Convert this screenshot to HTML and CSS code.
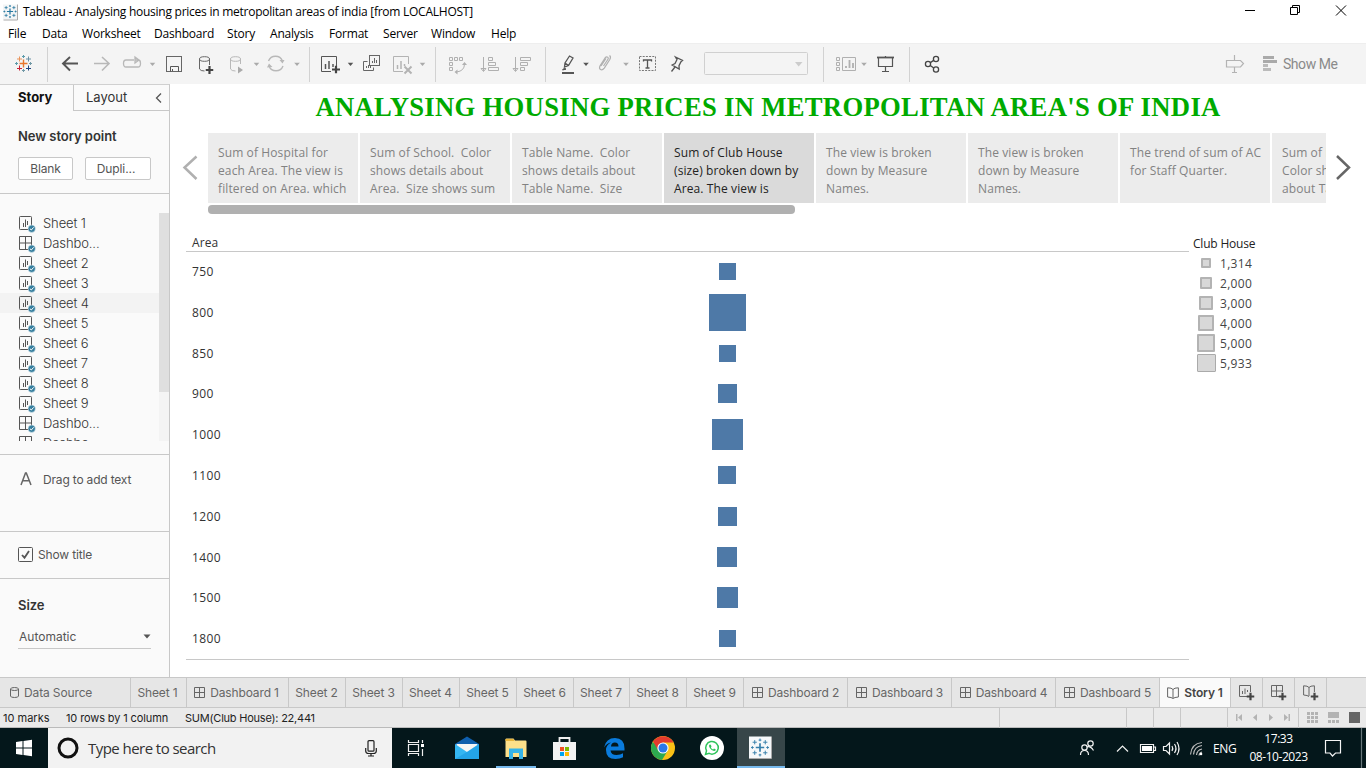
FILE: index.html
```html
<!DOCTYPE html>
<html lang="en">
<head>
<meta charset="utf-8">
<title>Tableau - Analysing housing prices in metropolitan areas of india</title>
<link rel="stylesheet" href="styles.css">
</head>
<body>
<svg class="defs" width="0" height="0">
  <symbol id="plus" viewBox="0 0 8 8"><path d="M4 0v8M0 4h8" stroke="#444" stroke-width="2.2"/></symbol>
  <symbol id="drop" viewBox="0 0 6 4"><path d="M0 0h6L3 3.6z"/></symbol>
  <symbol id="sheet" viewBox="0 0 17 17"><rect x=".5" y=".5" width="12" height="13" rx=".8" fill="none" stroke="#555"/><path d="M4.500 11V7M6.500 11V3.500M8.500 9V5" fill="none" stroke="#555"/><circle cx="12.700" cy="12.700" r="3.700" fill="#367f9f" stroke="#fafafa" stroke-width=".5"/><path d="M10.900 12.700l1.400 1.300 2.300-2.600" fill="none" stroke="#fff"/></symbol>
  <symbol id="dash" viewBox="0 0 17 17"><path d="M.5.500h12v13H.5zM6.500.500v13M.5 7h12" fill="none" stroke="#555"/><circle cx="12.700" cy="12.700" r="3.700" fill="#367f9f" stroke="#fafafa" stroke-width=".5"/><path d="M10.900 12.700l1.400 1.300 2.300-2.600" fill="none" stroke="#fff"/></symbol>
  <symbol id="grid" viewBox="0 0 11 11"><path d="M.5.500h10v10H.5zM5.500.500v10M.5 5.500h10" fill="none" stroke="#666"/></symbol>
  <symbol id="book" viewBox="0 0 12 12"><path d="M6 2.500L4 1.200.600.800v9.200l3.400.500 2 1 2-1 3.400-.5V.800L8 1.200zM6 2.500V11" fill="none" stroke="#666"/></symbol>
  <symbol id="mark" viewBox="-9 -9 18 18"><path d="M0-4v8M-4 0h8" stroke-width="1.600"/><path d="M-5-7v4M-7-5h4M5-7v4M3-5h4M-5 3v4M-7 5h4M5 3v4M3 5h4M0-8.500v2.600M-1.300-7h2.600M0 5.900v2.600M-1.300 7h2.600M-8.500 0h2.600M-7.200-1.300v2.600M5.900 0h2.600M7.200-1.300v2.600"/></symbol>
</svg>
<div class="window">
  <header class="titlebar">
    <svg class="app-icon" width="16" height="18" viewBox="0 0 16 18"><rect width="14.500" height="15" y="1.500" fill="#f3f5f6"/><path d="M14.500 1.500v15.500H.5" fill="none" stroke="#aaa"/><use href="#mark" x="0" y="1.500" width="14" height="14" stroke="#2678a0"/></svg>
    <span class="title-text">Tableau - Analysing housing prices in metropolitan areas of india [from LOCALHOST]</span>
    <svg class="controls" width="126" height="23" viewBox="1240 0 126 23" fill="none" stroke="#000"><path d="M1245 10.500h10M1290.500 7.500h7v7h-7zM1292.500 7.500v-2h7v7h-2M1336 5.500l10 10M1346 5.500l-10 10"/></svg>
  </header>
  <nav class="menubar"><span class="m-file">File</span><span class="m-data">Data</span><span class="m-work">Worksheet</span><span class="m-dash">Dashboard</span><span class="m-story">Story</span><span class="m-ana">Analysis</span><span class="m-format">Format</span><span class="m-server">Server</span><span class="m-window">Window</span><span>Help</span></nav>

  <div class="toolbar">
    <svg class="group" width="48" height="41" viewBox="0 43 48 41" fill="none"><path d="M23.500 59.500v8M19.500 63.500h8" stroke="#e8762c" stroke-width="1.400"/><path d="M19.500 56.500v5M17 59h5" stroke="#e8935a"/><path d="M28.500 56.500v5M26 59h5" stroke="#6b91a5"/><path d="M19.500 65.500v5M17 68.500h5" stroke="#c72035"/><path d="M28.500 65.500v5M26 68.500h5" stroke="#1f447e"/><path d="M23.500 55v3M22 56.500h3M16.500 62v3M15 63.500h3" stroke="#5b9aaa"/><path d="M23.500 69v3M22 70.500h3M30.500 62v3M29 63.500h3" stroke="#7199a6"/></svg>
    <svg class="group" width="262" height="41" viewBox="48 43 262 41" fill="none">
      <path d="M63 63.500h15M70 57l-7 6.500 7 7" stroke="#555" stroke-width="1.900"/>
      <g stroke="#b8b8b8" stroke-width="1.300"><path d="M94 63.500h15M102 57l7 6.500-7 7" stroke-width="1.600"/><path d="M134 60h-8q-2.500 0-2.500 3.500t2.500 3.500h12q2.500 0 2.500-3.500t-2-3.500h-3M135 57l4 3-4 3z"/></g>
      <rect x="166.500" y="56.500" width="15" height="15" stroke="#666"/><path d="M170.500 71.500v-5h8v5M172.500 69v2" stroke="#555"/>
      <g stroke="#666"><ellipse cx="204.500" cy="59" rx="5" ry="2.300"/><path d="M199.500 59v10q1 2 5 2M209.500 59v6"/></g><use href="#plus" x="205.500" y="66" width="8" height="8"/>
      <g stroke="#b8b8b8"><ellipse cx="235.500" cy="59" rx="5" ry="2.300"/><path d="M230.500 59v10q1 2 5 2M240.500 59v5"/></g><path d="M238 66.500l5 3.500-5 3.500z" fill="#aaa"/>
      <path d="M268.500 61a7.500 7.500 0 0 1 14 0M283 66a7.500 7.500 0 0 1-14 0" stroke="#b8b8b8" stroke-width="1.400"/><path d="M279.500 60h5l-2 3.500zM267 67.500l2-4 3.500 3.500z" fill="#b8b8b8"/>
      <g fill="#aaa"><use href="#drop" x="149.500" y="62.500" width="6" height="4"/><use href="#drop" x="253.500" y="62.500" width="6" height="4"/><use href="#drop" x="294" y="62.500" width="6" height="4"/></g>
    </svg>
    <svg class="group" width="126" height="41" viewBox="310 43 126 41" fill="none">
      <path d="M331 71.500h-9.500v-15h15V66" stroke="#555"/><path d="M325.500 64v5M329 61v8M333 64v3" stroke="#555" stroke-width="1.500"/><use href="#plus" x="332" y="65.500" width="8" height="8"/>
      <g stroke="#666"><rect x="369.500" y="55.500" width="10" height="10"/><path d="M372.500 63v-2M374.500 63v-5M376.500 63v-3M367.500 61.500h-4v9h10v-3M366.500 68v-2M368.500 68v-3M370.500 68v-2"/></g>
      <g stroke="#b3b3b3"><path d="M403 71.500h-9.500v-15h15V64"/><path d="M397.500 65v4M401 61v8M404.500 64v2" stroke-width="1.500"/><path d="M404.500 66.500l7 7M411.500 66.500l-7 7" stroke-width="2"/></g>
      <use href="#drop" x="347.500" y="62.500" width="6" height="4" fill="#555"/><use href="#drop" x="419.500" y="62.500" width="6" height="4" fill="#aaa"/>
    </svg>
    <svg class="group" width="110" height="41" viewBox="436 43 110 41" fill="none" stroke="#b0b0b0">
      <path d="M449.500 57.500h3v3h-3zM454.500 57.500h3v3h-3zM459.500 57.500h3v3h-3zM449.500 62.500h3v3h-3zM449.500 67.500h3v3h-3zM464.500 64q0 7-8 8"/><path d="M462 65l2.500-3 2.500 3zM457.500 69.500l-3 2.500 3 2.500z" fill="#b0b0b0" stroke="none"/>
      <path d="M483.500 57v14M481 68.500h5l-2.500 3zM488.500 57.500h4v3h-4zM488.500 62.500h7v3h-7zM488.500 67.500h10v3h-10z"/>
      <path d="M515.500 57v14M513 68.500h5l-2.500 3zM520.500 57.500h10v3h-10zM520.500 62.500h7v3h-7zM520.500 67.500h4v3h-4z"/>
    </svg>
    <svg class="group" width="278" height="41" viewBox="546 43 278 41" fill="none" stroke="#555">
      <path d="M564.500 67l.5-4 4.500-7 3.500 2-4.500 7.500zM565 63l3.500 2.500" stroke-width="1.300"/><path d="M562.500 70l2-2 1.500 1.200z" fill="#555"/><path d="M562 73h12" stroke-width="2"/>
      <path d="M603.500 66l4-6q1.500-2 .2-2.800t-2.700.8l-4.800 7.500q-1.500 3 .3 4t3.800-1.400l5.500-8.600q1.500-3-.3-4M601 66l5-7.500" stroke="#b0b0b0" stroke-width="1.200"/>
      <rect x="639.500" y="56.500" width="16" height="14" stroke="#777" stroke-dasharray="2 1.200"/><path d="M643.500 61.500v-1.500h8v1.500M647.500 60v8M645.500 68h4" stroke-width="1.300"/>
      <path d="M675.500 57l7 3.500-1.500 1.200-2 4 .2 3.300-7-4 2.800-1.400 2-4zM675 67l-3.500 4.500" stroke-width="1.300"/>
      <rect x="704.500" y="52.500" width="103" height="22" rx="1" stroke="#d0d0d0"/><path d="M795 62h7.500l-3.800 4.500z" fill="#ccc" stroke="none"/>
      <g stroke="none"><use href="#drop" x="583" y="62.500" width="6" height="4" fill="#555"/><use href="#drop" x="623" y="62.500" width="6" height="4" fill="#aaa"/></g>
    </svg>
    <svg class="group" width="86" height="41" viewBox="824 43 86 41" fill="none">
      <g stroke="#b0b0b0"><path d="M836.500 57.500h3v3h-3zM836.500 62.500h3v3h-3zM836.500 67.500h3v3h-3zM842.500 57.500h13v13h-13z"/><path d="M846 68v-2M849.500 68v-8M853 68v-5" stroke-width="1.800"/></g>
      <use href="#drop" x="861" y="62.500" width="6" height="4" fill="#aaa"/>
      <path d="M877 57.500h17" stroke="#555" stroke-width="1.800"/><path d="M878.500 58v8.500h14V58M885.500 67v4M882 71.500h7M885.500 56v1" stroke="#555" stroke-width="1.200"/>
    </svg>
    <svg class="group last" width="32" height="41" viewBox="910 43 32 41" fill="none" stroke="#444" stroke-width="1.300"><circle cx="928" cy="64" r="2.600"/><circle cx="936" cy="59" r="2.600"/><circle cx="936" cy="69.500" r="2.600"/><path d="M930.300 62.600l3.400-2.200M930.300 65.500l3.400 2.500"/></svg>
    <svg class="guide" width="56" height="41" viewBox="1224 43 56 41" fill="none"><path d="M1226.500 60.500h14l3 3-3 3.500h-14zM1234.500 55v5M1234.500 67v5.500M1232 72.500h5" stroke="#b3b3b3" stroke-width="1.200"/><path d="M1263 57.500h11M1263 61.500h14" stroke="#aaa" stroke-width="3"/><path d="M1263 65.500h5M1263 69.500h8" stroke="#bbb" stroke-width="3"/></svg>
    <span class="showme">Show Me</span>
  </div>

  <main class="work">
    <aside class="side">
      <div class="side-tabs"><b>Story</b><span>Layout<svg width="7" height="12" viewBox="0 0 7 12" fill="none" stroke="#555" stroke-width="1.300"><path d="M6 1.500L1.500 6 6 10.500"/></svg></span></div>
      <section class="new-point"><h2>New story point</h2><div class="buttons"><button class="blank">Blank</button><button class="dup">Dupli...</button></div></section>
      <section class="sheets">
        <ul>
          <li><svg width="17" height="17"><use href="#sheet"/></svg>Sheet 1</li>
          <li><svg width="17" height="17"><use href="#dash"/></svg>Dashbo...</li>
          <li><svg width="17" height="17"><use href="#sheet"/></svg>Sheet 2</li>
          <li><svg width="17" height="17"><use href="#sheet"/></svg>Sheet 3</li>
          <li class="hover"><svg width="17" height="17"><use href="#sheet"/></svg>Sheet 4</li>
          <li><svg width="17" height="17"><use href="#sheet"/></svg>Sheet 5</li>
          <li><svg width="17" height="17"><use href="#sheet"/></svg>Sheet 6</li>
          <li><svg width="17" height="17"><use href="#sheet"/></svg>Sheet 7</li>
          <li><svg width="17" height="17"><use href="#sheet"/></svg>Sheet 8</li>
          <li><svg width="17" height="17"><use href="#sheet"/></svg>Sheet 9</li>
          <li><svg width="17" height="17"><use href="#dash"/></svg>Dashbo...</li>
          <li><svg width="17" height="17"><use href="#dash"/></svg>Dashbo...</li>
        </ul>
        <div class="track"><div class="thumb"></div></div>
      </section>
      <section class="drag"><svg width="12" height="14" viewBox="0 0 12 14" fill="none" stroke="#666" stroke-width="1.500"><path d="M1 13L5.500 1h.8L11 13M2.800 8.800h6.400"/></svg><span>Drag to add text</span></section>
      <section class="show-title"><svg width="15" height="15" viewBox="0 0 15 15" fill="none"><rect x=".5" y=".5" width="14" height="14" rx="1" stroke="#555"/><path d="M4 8l2.500 2.700L11 4" stroke="#555" stroke-width="1.800"/></svg><span>Show title</span></section>
      <section class="size"><h2>Size</h2><div class="select"><span>Automatic</span><svg width="8" height="5" viewBox="0 0 8 5" fill="#555"><path d="M.5.500h7L4 4.500z"/></svg></div></section>
    </aside>

    <section class="story">
      <h1>ANALYSING HOUSING PRICES IN METROPOLITAN AREA'S OF INDIA</h1>
      <div class="navigator">
        <svg class="prev" width="38" height="70" viewBox="170 133 38 70" fill="none" stroke="#b0b0b0" stroke-width="2.500"><path d="M196.500 156.500L184.500 167.500l12 11.500"/></svg>
        <div class="points">
          <div class="point">Sum of Hospital for<br>each Area. The view is<br>filtered on Area. which</div>
          <div class="point">Sum of School.&nbsp; Color<br>shows details about<br>Area.&nbsp; Size shows sum</div>
          <div class="point">Table Name.&nbsp; Color<br>shows details about<br>Table Name.&nbsp; Size</div>
          <div class="point active">Sum of Club House<br>(size) broken down by<br>Area. The view is</div>
          <div class="point">The view is broken<br>down by Measure<br>Names.</div>
          <div class="point">The view is broken<br>down by Measure<br>Names.</div>
          <div class="point">The trend of sum of AC<br>for Staff Quarter.</div>
          <div class="point">Sum of H<br>Color sho<br>about Tab</div>
        </div>
        <svg class="next" width="40" height="70" viewBox="1326 133 40 70" fill="none" stroke="#666" stroke-width="2.500"><path d="M1337 156l12 11.500-12 11.500"/></svg>
      </div>
      <div class="hscroll"></div>
      <div class="view">
        <svg class="chart" width="1019" height="440" viewBox="170 228 1019 440">
          <path d="M186 251.500h1003M186 659.500h1003" stroke="#c8c8c8"/>
          <g class="labels"><text class="head" x="192" y="247">Area</text><text x="192" y="276">750</text><text x="192" y="317">800</text><text x="192" y="358">850</text><text x="192" y="398">900</text><text x="192" y="439">1000</text><text x="192" y="480">1100</text><text x="192" y="521">1200</text><text x="192" y="562">1400</text><text x="192" y="602">1500</text><text x="192" y="643">1800</text></g>
          <g fill="#4e79a7"><rect x="719" y="263" width="17" height="17"/><rect x="709" y="294" width="37" height="37"/><rect x="719" y="345" width="17" height="17"/><rect x="718" y="384" width="19" height="19"/><rect x="712" y="419" width="31" height="31"/><rect x="718" y="466" width="18" height="18"/><rect x="718" y="507" width="19" height="19"/><rect x="717" y="547" width="20" height="20"/><rect x="717" y="587" width="21" height="21"/><rect x="719" y="630" width="17" height="17"/></g>
        </svg>
        <div class="legend">
          <h3>Club House</h3>
          <div><i class="s1"></i>1,314</div><div><i class="s2"></i>2,000</div><div><i class="s3"></i>3,000</div><div><i class="s4"></i>4,000</div><div><i class="s5"></i>5,000</div><div><i class="s6"></i>5,933</div>
        </div>
      </div>
    </section>
  </main>

  <nav class="tabs">
    <span class="source"><svg width="9" height="11" viewBox="0 0 9 11" fill="none" stroke="#666"><ellipse cx="4.500" cy="2" rx="4" ry="1.500"/><path d="M.5 2v7q0 1.500 4 1.500t4-1.500V2"/></svg>Data Source</span>
    <span class="first">Sheet 1</span>
    <span class="d1"><svg width="11" height="11"><use href="#grid"/></svg>Dashboard 1</span>
    <span class="s">Sheet 2</span><span class="s">Sheet 3</span><span class="s">Sheet 4</span><span class="s">Sheet 5</span><span class="s">Sheet 6</span><span class="s narrow">Sheet 7</span><span class="s">Sheet 8</span><span class="s">Sheet 9</span>
    <span class="d"><svg width="11" height="11"><use href="#grid"/></svg>Dashboard 2</span>
    <span class="d"><svg width="11" height="11"><use href="#grid"/></svg>Dashboard 3</span>
    <span class="d"><svg width="11" height="11"><use href="#grid"/></svg>Dashboard 4</span>
    <span class="d"><svg width="11" height="11"><use href="#grid"/></svg>Dashboard 5</span>
    <span class="current"><svg width="12" height="12"><use href="#book"/></svg>Story 1</span>
    <span class="new"><svg width="16" height="16" viewBox="0 0 16 16"><path d="M8 11.500H.5V.500h11V7M3.500 9V6M6 9V3.500M8.500 7V5" fill="none" stroke="#666"/><use href="#plus" x="7.500" y="7.500" width="8" height="8"/></svg></span>
    <span class="new"><svg width="16" height="16" viewBox="0 0 16 16"><path d="M8 11.500H.5V.500h11V7M5.500.500v11M.5 6h11" fill="none" stroke="#666"/><use href="#plus" x="7.500" y="7.500" width="8" height="8"/></svg></span>
    <span class="new"><svg width="16" height="16" viewBox="0 0 16 16"><path d="M6 2.500L4 1.200.600.800v9.200l3.400.500 2 1M6 2.500V11M6 2.500L8 1.200l3.400-.4V7" fill="none" stroke="#666"/><use href="#plus" x="7.500" y="7.500" width="8" height="8"/></svg></span>
  </nav>
  <footer class="status">
    <span class="marks">10 marks</span><span class="rows">10 rows by 1 column</span><span class="sum">SUM(Club House): 22,441</span>
    <svg width="368" height="20" viewBox="998 708 368 20" fill="#b3b3b3"><path d="M999.500 708v20M1126.500 708v20M1153.500 708v20M1180.500 708v20M1227.500 708v20M1298.500 708v20" stroke="#c8c8c8"/><path d="M1236 714h1.500v7h-1.500zM1242 714v7l-4-3.500zM1257 714v7l-4-3.500zM1269 714v7l4-3.500zM1284 714v7l4-3.500zM1288.500 714h1.500v7h-1.500z"/><path d="M1307 712h3v3h-3zM1311 712h3v3h-3zM1315 712h3v3h-3zM1307 716h3v3h-3zM1311 716h3v3h-3zM1315 716h3v3h-3zM1307 720h3v3h-3zM1311 720h3v3h-3zM1315 720h3v3h-3zM1328 712h11v6h-11zM1328 720h3v3h-3zM1332 720h3v3h-3zM1336 720h3v3h-3z"/><path d="M1349 712h11v11h-11z" fill="#666"/></svg>
  </footer>

  <footer class="taskbar">
    <svg class="start" width="48" height="40" viewBox="0 728 48 40" fill="#fff"><path d="M16 742l6.500-1v6.500H16zM23.500 740.900l8.500-1.200v7.800h-8.500zM16 748.500h6.500v6.500l-6.500-1zM23.500 748.500H32v7.800l-8.500-1.200z"/></svg>
    <div class="search"><svg width="22" height="22" viewBox="0 0 22 22" fill="none" stroke="#111" stroke-width="3"><circle cx="11" cy="11" r="9"/></svg><span>Type here to search</span><svg class="mic" width="12" height="17" viewBox="0 0 12 17" fill="none" stroke="#222" stroke-width="1.200"><rect x="3" y=".7" width="6" height="10.500" rx="1"/><path d="M.7 8v3q0 2.500 3 2.500h4.600q3 0 3-2.500V8M6 13.500v2.500M3 16h6"/></svg></div>
    <svg class="pins" width="345" height="40" viewBox="392 728 345 40">
      <path d="M408.500 740v2.500h10V740M408.500 756v-2.500h10V756M408.500 744.500h10v7h-10zM422.500 740v3M422.500 749v7" fill="none" stroke="#eee" stroke-width="1.200"/><path d="M421 744h3v3h-3z" fill="#fff"/>
      <path d="M455 744l12-7.500 12 7.500v4h-24z" fill="#0f5fae"/><path d="M456.500 744h21v8h-21z" fill="#f5f5f5"/><path d="M455 744v15h24v-15l-12 8z" fill="#35b6f2"/><path d="M455 759l12-7 12-8v15z" fill="#1595e0" opacity=".55"/>
      <path d="M505.500 739.500q0-1 1-1h7l1.500 2h10.500q1 0 1 1V757h-21z" fill="#fde08a"/><path d="M505.500 739h8l1 2h-9z" fill="#e8b53c"/><path d="M509 748.500h14V759h-4v-6h-6v6h-4z" fill="#35b3e8"/><path d="M496 766h40v2h-40z" fill="#76b9ed"/>
      <path d="M553 742h23v18h-23z" fill="#f3f3f3"/><path d="M559.500 745v-7h10v7" fill="none" stroke="#eee" stroke-width="1.800"/><path d="M560 747h4v4h-4z" fill="#f25022"/><path d="M565 747h4v4h-4z" fill="#7fba00"/><path d="M560 752h4v4h-4z" fill="#00a4ef"/><path d="M565 752h4v4h-4z" fill="#ffb900"/>
      <path d="M604 747.500q2-9.500 11-9.500 9.500 0 9.500 10.500v2h-14q.7 4.500 6 4.500 4 0 6.500-1.700v4q-3 1.700-7.500 1.700-9.500 0-9.500-9 0-5 5-7.500-4 .7-7 5zM611 746.500h7.500q0-4-3.600-4t-3.900 4z" fill="#0a7bdc" fill-rule="evenodd"/>
      <circle cx="663" cy="748" r="12" fill="#fbc116"/><path d="M663 748h-2l-8.400-6A12 12 0 0 0 662 760l5.500-9z" fill="#2da94f"/><path d="M653 741.500A12 12 0 0 1 673.600 742.500H663L658 750z" fill="#e33b2e"/><circle cx="663" cy="748" r="5.600" fill="#fff"/><circle cx="663" cy="748" r="4.500" fill="#2b78e8"/>
      <circle cx="712" cy="748" r="12" fill="#fff"/><path d="M705.500 754.500l1-3.600a6.300 6.300 0 1 1 2.600 2.500z" fill="none" stroke="#2fc35b" stroke-width="1.500"/><path d="M709.800 744.600q-1.600 1 .2 3.600t4 2.900q1.700 0 1.800-1.600l-1.800-.9-.9.900q-1.600-.700-2.200-2.100l.6-.9-.700-1.800z" fill="#2fc35b"/>
    </svg>
    <svg class="tableau" width="48" height="40" viewBox="737 728 48 40"><path d="M749 736.500h22v22h-22z" fill="#f5f8fa"/><path d="M749 758.500h22.500v-22" fill="none" stroke="#aaa"/><use href="#mark" x="750.500" y="738" width="19" height="19" stroke="#367fab" stroke-width=".9"/><path d="M737 766h48v2h-48z" fill="#76b9ed"/></svg>
    <svg class="tray" width="132" height="40" viewBox="1076 728 132 40" fill="none" stroke="#f2f2f2" stroke-width="1.200"><circle cx="1090.500" cy="743.500" r="2.700"/><circle cx="1084.500" cy="747.500" r="2.700"/><path d="M1086.500 747q4-1.500 7 3.500M1080.500 755q0-4.500 4-4.500t4 4.500M1117 751.500l5.500-5.500 5.500 5.500"/><path d="M1140.500 744.500h13v8h-13zM1154 747h1.500v3.500h-1.500"/><path d="M1142 746h10v5h-10z" fill="#fff" stroke="none"/><path d="M1163.500 746.500h2.500l3.500-3.500v11l-3.500-3.500h-2.500zM1172 746q1.500 2.500 0 5M1174.500 744q3 4.500 0 9M1177 742q4 6.500 0 13"/><path d="M1190.500 754.500q1-11 11.500-12M1193.500 754.500q.7-8 8.500-9M1196.500 755q.5-5 5.500-6M1199 755.500q.5-3 3-3.500" stroke="#bbb"/><circle cx="1201" cy="754" r="1.300" fill="#fff" stroke="none"/></svg>
    <span class="lang">ENG</span>
    <div class="clock"><span>17:33</span><span class="date">08-10-2023</span></div>
    <svg class="notify" width="50" height="40" viewBox="1316 728 50 40" fill="none" stroke="#f5f5f5" stroke-width="1.200"><path d="M1325.500 740.500h15v12.500h-5l-3 3-2.500-3h-4.500z"/><path d="M1361.500 728v40" stroke="#68777a"/></svg>
  </footer>
</div>
</body>
</html>
```
FILE: styles.css
```css
* { box-sizing: border-box; }
body { margin: 0; font-family: "Open Sans", "Noto Sans", sans-serif; font-size: 12px; color: #333; overflow: hidden; }
h1, h2, h3, ul { margin: 0; padding: 0; }
svg { display: block; flex: none; }
.defs { position: absolute; }
.window { width: 1366px; height: 768px; display: grid; grid-template-rows: 23px 20px 41px 593px 31px 20px 40px; background: #fff; overflow: hidden; white-space: nowrap; }

.titlebar { display: flex; align-items: center; color: #000; }
.app-icon { margin-left: 3px; }
.title-text { margin-left: 4px; letter-spacing: -.25px; }
.controls { margin-left: auto; }
.menubar { display: flex; align-items: center; padding-left: 8px; color: #000; letter-spacing: -.2px; }
.menubar span { width: 50px; }
.menubar .m-file { width: 34px; }
.menubar .m-data { width: 40px; }
.menubar .m-work { width: 72px; }
.menubar .m-dash { width: 73px; }
.menubar .m-story { width: 43px; }
.menubar .m-ana { width: 59px; }
.menubar .m-format { width: 54px; }
.menubar .m-server { width: 48px; }
.menubar .m-window { width: 60px; }

.toolbar { display: flex; background: #f4f4f4; border-top: 1px solid #eee; }
.toolbar svg { margin-top: -1px; }
.group { background: linear-gradient(#d2d2d2, #d2d2d2) right 4px / 1px 35px no-repeat; }
.group.last { background: none; }
.guide { margin-left: auto; }
.showme { width: 83px; font: 14px/40px Roboto, sans-serif; color: #8a8a8a; letter-spacing: -.45px; margin-left: 3px; }

.work { display: grid; grid-template-columns: 170px 1196px; min-height: 0; }
.side { background: #fafafa; border-right: 1px solid #c8c8c8; border-top: 1px solid #d0d0d0; font-family: Inter, Roboto, sans-serif; color: #555; display: grid; grid-template-rows: 26px 83px 261px 77px 47px 98px; }
.side-tabs { display: grid; grid-template-columns: 73px 96px; font-size: 13px; line-height: 25px; }
.side-tabs b { padding-left: 18px; color: #111; }
.side-tabs span { display: flex; align-items: center; padding-left: 12px; border-left: 1px solid #c8c8c8; border-bottom: 1px solid #c8c8c8; color: #333; }
.side-tabs svg { margin-left: auto; margin-right: 7px; }
.side > section { border-bottom: 1px solid #c8c8c8; }
.side h2 { font-size: 13px; font-weight: 600; line-height: 18px; color: #333; letter-spacing: -.05px; }
.new-point { padding: 16px 0 0 18px; }
.buttons { display: flex; gap: 12px; margin-top: 12px; }
.buttons button { height: 23px; padding: 0; border: 1px solid #c8c8c8; border-radius: 2px; background: #fff; color: #555; font: 12px Inter, sans-serif; letter-spacing: -.1px; }
.blank { width: 55px; }
.buttons .dup { width: 66px; padding-right: 4px; }
.sheets { display: grid; grid-template-columns: 159px 10px; padding: 19px 0 13px; overflow: hidden; }
.sheets ul { list-style: none; overflow: hidden; height: 228px; }
.sheets li { height: 20px; display: flex; align-items: center; padding-left: 19px; gap: 7px; font-size: 13px; font-weight: 300; color: #333; letter-spacing: -.1px; }
.sheets li svg { margin-top: 3px; }
.sheets li.hover { background: #f3f3f3; }
.track { background: #f4f4f4; height: 228px; }
.thumb { height: 179px; background: #dfdfdf; }
.drag { display: flex; gap: 11px; padding: 17px 0 0 20px; letter-spacing: -.18px; }
.show-title { display: flex; align-items: center; padding: 0 0 1px 18px; gap: 5px; letter-spacing: -.15px; }
.side > .size { padding: 17px 18px 0; border: 0; }
.select { display: flex; justify-content: space-between; align-items: center; height: 25px; margin-top: 10px; padding-left: 1px; border-bottom: 1px solid #c8c8c8; }

.story { min-width: 0; }
h1 { height: 49px; padding-top: 8px; text-align: center; font: bold 26.67px/30px "Liberation Serif", serif; color: #00aa00; letter-spacing: .3px; }
.navigator { display: grid; grid-template-columns: 38px 1118px 40px; height: 70px; }
.points { display: flex; gap: 2px; overflow: hidden; }
.point { flex: 0 0 150px; background: #ececec; color: #828282; padding: 11px 0 0 10px; line-height: 18px; letter-spacing: .11px; }
.point.active { background: #dadada; color: #222; }
.hscroll { width: 587px; height: 9px; margin: 2px 0 0 38px; border-radius: 4px; background: #b0b0b0; }
.view { display: flex; margin-top: 14px; }
.labels text { font: 12px "Open Sans", sans-serif; fill: #333; letter-spacing: .4px; }
.labels .head { letter-spacing: .1px; }
.legend { padding-left: 4px; padding-top: 6px; color: #444; letter-spacing: .3px; }
.legend h3 { font-size: 12px; font-weight: 400; line-height: 19px; color: #222; letter-spacing: -.2px; }
.legend div { display: grid; grid-template-columns: 27px auto; align-items: center; height: 20px; }
.legend i { display: block; justify-self: center; margin-right: 1px; background: #d8d8d8; border: 2px solid #b3b3b3; border-radius: 1px; }
.s1 { width: 10px; height: 10px; }
.s2 { width: 12px; height: 12px; }
.s3 { width: 14px; height: 14px; }
.s4 { width: 16px; height: 16px; }
.s5 { width: 18px; height: 18px; }
.legend .s6 { width: 19px; height: 18px; border-width: 1px; border-color: #aaa; }

.tabs { display: flex; background: #e6e6e6; border-top: 1px solid #c8c8c8; border-bottom: 1px solid #c8c8c8; font: 12px Inter, sans-serif; color: #666; letter-spacing: -.13px; }
.tabs span { display: flex; align-items: center; justify-content: center; gap: 5px; border-right: 1px solid #c8c8c8; }
.tabs .source { width: 131px; justify-content: flex-start; padding-left: 10px; }
.tabs .first { width: 56px; padding-right: 2px; }
.tabs .d1 { width: 102px; padding-right: 2px; }
.tabs .s { width: 57px; padding-right: 1px; }
.tabs .s.narrow { width: 56px; }
.tabs .d { width: 104px; }
.tabs .current { width: 71px; background: #fafafa; color: #444; font-weight: 600; }
.tabs .new { width: 32px; }
.status { display: flex; align-items: center; background: #eaeaea; border-bottom: 1px solid #bbb; font: 11px Inter, sans-serif; color: #222; padding-left: 3px; }
.status .marks { width: 63px; }
.status .rows { width: 119px; letter-spacing: -.12px; }
.status .sum { letter-spacing: -.22px; }
.status svg { margin-left: auto; }

.taskbar { display: flex; align-items: center; background: #04171b; color: #fff; }
.search { width: 344px; height: 40px; display: flex; align-items: center; background: #f2f2f2; color: #333; padding: 0 15px 0 9px; }
.search span { font-size: 15px; letter-spacing: -.55px; margin-left: 9px; }
.mic { margin-left: auto; }
.tableau { background: #374649; }
.tray { margin-left: auto; }
.lang { width: 28px; margin-left: 5px; letter-spacing: -.4px; }
.clock { width: 75px; display: grid; text-align: center; line-height: 18px; letter-spacing: -.45px; }
```
